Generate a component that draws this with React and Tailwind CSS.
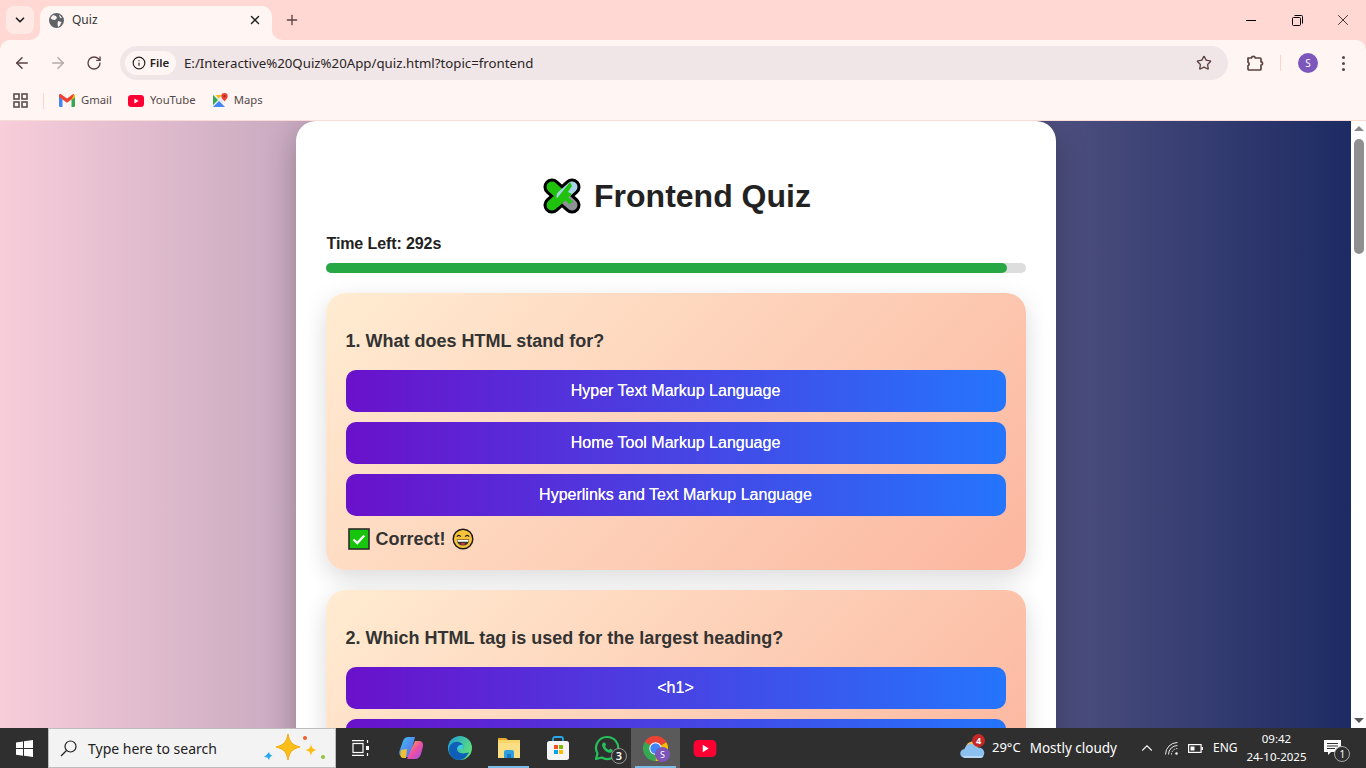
import { ArrowLeft, ArrowRight, RotateCw, Star, X, Plus, ChevronDown, ChevronUp, Info } from 'lucide-react'

const options1 = ['Hyper Text Markup Language', 'Home Tool Markup Language', 'Hyperlinks and Text Markup Language']
const options2 = ['<h1>', '']

function PuzzleEmoji() {
  return (
    <svg width="38" height="36" viewBox="0 0 38 36" className="shrink-0">
      <path d="M9 9l20 18M29 9L9 27" stroke="#000" strokeWidth="17" strokeLinecap="round" fill="none" />
      <path d="M19 18L29 27" stroke="#8d9296" strokeWidth="11" strokeLinecap="round" />
      <path d="M9 9l10 9M9 27l10-9" stroke="#1fc20c" strokeWidth="11" strokeLinecap="round" />
      <path d="M29 9L19 18" stroke="#a9d3ea" strokeWidth="11" strokeLinecap="round" />
      <path d="M27 4L11 24l4 5 14-13-4-2 4-6z" fill="#1fc20c" />
      <path d="M26 26l-7-7 3-3 8 8z" fill="#1fc20c" />
    </svg>
  )
}

function CheckEmoji() {
  return (
    <svg width="22" height="22" viewBox="0 0 22 22" className="shrink-0">
      <rect x="1" y="1" width="20" height="20" fill="#17c60c" stroke="#2b2b2b" strokeWidth="1.6" />
      <path d="M5.500 11.500l3.800 3.600 7-7.600" fill="none" stroke="#fff" strokeWidth="2.200" />
    </svg>
  )
}

function GrinEmoji() {
  return (
    <svg width="22" height="22" viewBox="0 0 22 22" className="shrink-0">
      <circle cx="11" cy="11" r="9.800" fill="#f8c23a" stroke="#1b1b1b" strokeWidth="1.400" />
      <path d="M4.800 8.600q2-2.600 4 0M13.200 8.600q2-2.600 4 0" fill="none" stroke="#1b1b1b" strokeWidth="1.200" />
      <path d="M4.800 11.500h12.400q-.4 6-6.200 6t-6.200-6z" fill="#333" />
      <path d="M5.400 12h11.200l-.4 1.800H5.800z" fill="#fff" />
      <path d="M8 16q3-2 6 0q-3 1.600-6 0z" fill="#e8403a" />
    </svg>
  )
}

function GmailIcon() {
  return (
    <svg width="16" height="13" viewBox="0 0 16 13">
      <path d="M0 2.500V12a1 1 0 0 0 1 1h2.500V5.500z" fill="#4285f4" />
      <path d="M16 2.500V12a1 1 0 0 1-1 1h-2.500V5.500z" fill="#34a853" />
      <path d="M12.500 1.200L16 .8v2.500l-3.500 2.600z" fill="#fbbc04" />
      <path d="M0 1.500C0 .2 1.400-.4 2.400.4L8 4.600 13.600.4c1-.8 1.400-.2 1.400-.2L12.500 5.500 8 8.800 3.500 5.500 0 3z" fill="#ea4335" />
    </svg>
  )
}

function YoutubeIcon({ w = 16, h = 12 }) {
  return (
    <svg width={w} height={h} viewBox="0 0 16 12">
      <rect width="16" height="12" rx="3.200" fill="#ff0033" />
      <path d="M6.400 3.400l4.200 2.600-4.200 2.600z" fill="#fff" />
    </svg>
  )
}

function MapsIcon() {
  return (
    <svg width="15" height="16" viewBox="0 0 15 16">
      <path d="M0 2h10v12H0z" fill="#e8eaed" />
      <path d="M0 2l5 5-5 5z" fill="#34a853" />
      <path d="M0 14l6-6 6 6z" fill="#4285f4" />
      <path d="M3 2h6L5.500 5.500z" fill="#fbbc04" />
      <path d="M11.500 0a3.200 3.200 0 0 1 3.200 3.200c0 2.300-3.200 5-3.200 5s-3.200-2.700-3.200-5A3.200 3.200 0 0 1 11.500 0z" fill="#ea4335" />
      <circle cx="11.500" cy="3.200" r="1.100" fill="#a52714" />
    </svg>
  )
}

function ExtensionIcon() {
  return (
    <svg width="18" height="18" viewBox="0 0 18 18" fill="none" stroke="#5b4240" strokeWidth="1.700">
      <path d="M2 4h3.400a2 2 0 0 1 3.900 0H14a1 1 0 0 1 1 1v2.800a1.600 1.600 0 0 1 0 3.200V15a1 1 0 0 1-1 1H3a1 1 0 0 1-1-1v-3.200a2 2 0 0 0 0-3.600z" strokeLinejoin="round" />
    </svg>
  )
}

function AppsIcon() {
  return (
    <svg width="15" height="15" viewBox="0 0 15 15" fill="none" stroke="#5b4f4d" strokeWidth="1.600">
      <rect x="1" y="1" width="5" height="5" />
      <rect x="9" y="1" width="5" height="5" />
      <rect x="1" y="9" width="5" height="5" />
      <rect x="9" y="9" width="5" height="5" />
    </svg>
  )
}

function GlobeIcon() {
  return (
    <svg width="15" height="15" viewBox="0 0 15 15">
      <circle cx="7.500" cy="7.500" r="7.500" fill="#5f6368" />
      <path d="M4 2l3 1 1 2-2 2-3-.5L1.500 5zM9 8l3.500 1L11 12.500 9 14l-.5-3zM10 1.500l3 3-2 .5z" fill="#fff6f4" />
    </svg>
  )
}

function WindowsLogo() {
  return (
    <svg width="17" height="17" viewBox="0 0 17 17" fill="#fff">
      <path d="M0 2.400l7-1v6.700H0zM8 1.300L17 0v8.100H8zM0 9h7v6.700l-7-1zM8 9h9v8l-9-1.300z" />
    </svg>
  )
}

function SearchGlass() {
  return (
    <svg width="17" height="17" viewBox="0 0 17 17" fill="none" stroke="#1f1f1f" strokeWidth="1.200">
      <circle cx="10.500" cy="6.500" r="5.500" />
      <path d="M6.500 10.500L1 16" />
    </svg>
  )
}

function Sparkles() {
  return (
    <svg width="66" height="36" viewBox="0 0 66 36" className="shrink-0">
      <path d="M24 4c1.500 8 4 11 12 13-8 2-10.500 5-12 13-1.500-8-4-11-12-13 8-2 10.500-5 12-13z" fill="#fbbf1c" stroke="#f6a90f" strokeWidth="1" strokeLinejoin="round" />
      <path d="M47 14c.8 4 2 5.300 6 6-4 .7-5.200 2-6 6-.8-4-2-5.300-6-6 4-.7 5.200-2 6-6z" fill="#fbbf1c" />
      <path d="M5 22c.5 2 1 3 3.500 3.500L6 27l-1 3-1.500-2.500L0 27l2.500-2z" fill="#27a8f0" />
      <circle cx="41" cy="8" r="2" fill="#f0602a" />
      <circle cx="59" cy="27" r="2" fill="#8cc63f" />
    </svg>
  )
}

function TaskView() {
  return (
    <svg width="18" height="16" viewBox="0 0 18 16" fill="none" stroke="#fff" strokeWidth="1.200">
      <path d="M0 .6h12M0 15.400h12" />
      <rect x="1" y="3.500" width="10" height="9" />
      <path d="M15.500 0v3M15.500 13v3" />
      <rect x="14" y="6" width="3" height="4" fill="#fff" stroke="none" />
    </svg>
  )
}

function CopilotIcon() {
  return (
    <svg width="24" height="22" viewBox="0 0 24 22">
      <defs>
        <linearGradient id="cp1" x1="0" y1="0" x2="1" y2="1">
          <stop offset="0" stopColor="#36c6f0" />
          <stop offset="1" stopColor="#6a5cf0" />
        </linearGradient>
        <linearGradient id="cp2" x1="0" y1="0" x2="1" y2="1">
          <stop offset="0" stopColor="#f0d030" />
          <stop offset="0.5" stopColor="#f04fa0" />
          <stop offset="1" stopColor="#9a4ff0" />
        </linearGradient>
      </defs>
      <path d="M9 0h7l-5 20H5c-4 0-5.500-3-4.500-6L4 4c1-3 3-4 5-4z" fill="url(#cp1)" />
      <path d="M8 22h8c3 0 5-2 6-5l2-8c.5-3-1-5-4-5h-4z" fill="url(#cp2)" />
      <path d="M2 13l6-1-1 9H4c-3 0-3-4-2-8z" fill="#f0c030" />
    </svg>
  )
}

function EdgeIcon() {
  return (
    <svg width="24" height="24" viewBox="0 0 24 24">
      <defs>
        <linearGradient id="ed1" x1="0" y1="0" x2="1" y2="0.6">
          <stop offset="0" stopColor="#1f9ed8" />
          <stop offset="1" stopColor="#5ee07a" />
        </linearGradient>
      </defs>
      <circle cx="12" cy="12" r="12" fill="url(#ed1)" />
      <path d="M1 14C1 7 8 4 13 7c3 2 3 5 2 6h-6c0 4 6 6 12 3-2 5-6 8-10 8-5 0-10-4-10-10z" fill="#0f5fb8" />
      <path d="M9 13c0-3 3-5 6-4 1 1 1 3 0 4z" fill="#3ccbd8" />
    </svg>
  )
}

function ExplorerIcon() {
  return (
    <svg width="24" height="20" viewBox="0 0 24 20">
      <path d="M1 0h8l2 2h-10z" fill="#e2a92c" />
      <rect x="1" y="2" width="22" height="18" fill="#f8d568" />
      <rect x="1" y="5" width="22" height="15" fill="#fbdf85" />
      <path d="M7 20v-6a2 2 0 0 1 2-2h6a2 2 0 0 1 2 2v6h-3v-4h-4v4z" fill="#2f9fe0" />
      <rect x="10" y="16" width="4" height="4" fill="#1c78c0" />
    </svg>
  )
}

function StoreIcon() {
  return (
    <svg width="24" height="24" viewBox="0 0 24 24">
      <path d="M7 6V3a2 2 0 0 1 2-2h6a2 2 0 0 1 2 2v3" fill="none" stroke="#29a8e8" strokeWidth="1.800" />
      <rect x="1" y="5" width="22" height="19" rx="2.500" fill="#f5f5f5" />
      <rect x="8" y="9" width="4" height="4" fill="#f25022" />
      <rect x="13" y="9" width="4" height="4" fill="#7fba00" />
      <rect x="8" y="14" width="4" height="4" fill="#00a4ef" />
      <rect x="13" y="14" width="4" height="4" fill="#ffb900" />
    </svg>
  )
}

function WhatsappIcon() {
  return (
    <svg width="26" height="26" viewBox="0 0 26 26">
      <path d="M13 2a11 11 0 0 0-9.500 16.500L2 24l5.700-1.500A11 11 0 1 0 13 2z" fill="none" stroke="#25c05a" strokeWidth="2.200" strokeLinejoin="round" />
      <path d="M9.500 7.500c-1 .5-1.800 2-1.200 3.800 1 3 3.500 5.400 6.400 6.400 1.800.5 3.300-.2 3.800-1.200l.3-1.500-2.700-1.400-1.100 1.300c-1.800-.6-3.300-2.100-4-3.900l1.200-1.100L11 7.700z" fill="#25c05a" />
    </svg>
  )
}

function ChromeIcon() {
  return (
    <svg width="25" height="25" viewBox="0 0 24 24">
      <g fill="none" strokeWidth="6.200">
        <circle cx="12" cy="12" r="9" stroke="#ea4335" strokeDasharray="18.850 37.700" transform="rotate(-150 12 12)" />
        <circle cx="12" cy="12" r="9" stroke="#fbbc04" strokeDasharray="18.850 37.700" transform="rotate(-30 12 12)" />
        <circle cx="12" cy="12" r="9" stroke="#34a853" strokeDasharray="18.850 37.700" transform="rotate(90 12 12)" />
      </g>
      <circle cx="12" cy="12" r="6" fill="#fff" />
      <circle cx="12" cy="12" r="5" fill="#4285f4" />
    </svg>
  )
}

function CloudIcon() {
  return (
    <svg width="26" height="22" viewBox="0 0 26 22">
      <path d="M6 10a7 7 0 0 1 13-2l-3 6z" fill="#f0c060" />
      <path d="M5 21a4.500 4.500 0 0 1-.5-9 6.500 6.500 0 0 1 12.300-1 5 5 0 0 1 4.200 10z" fill="#8cc0ee" />
      <path d="M5 21a4.500 4.500 0 0 1-2.500-2h21q-1 2-3 2z" fill="#b6d8f6" />
    </svg>
  )
}

function WifiIcon() {
  return (
    <svg width="14" height="13" viewBox="0 0 14 13" fill="none" stroke="#e8e8e8" strokeWidth="1">
      <path d="M.5 12.500A12 12 0 0 1 12.500 .5" />
      <path d="M3.500 12.500a9 9 0 0 1 9-9" />
      <path d="M6.500 12.500a6 6 0 0 1 6-6" strokeDasharray="1.500 1" />
      <circle cx="11.500" cy="11.500" r="1.200" fill="#fff" stroke="none" />
    </svg>
  )
}

function BatteryIcon() {
  return (
    <svg width="15" height="9" viewBox="0 0 15 9">
      <rect x=".6" y=".6" width="12.500" height="7.800" fill="none" stroke="#fff" strokeWidth="1.200" />
      <rect x="2.500" y="2.500" width="4" height="4" fill="#fff" />
      <rect x="13.500" y="3" width="1.500" height="3" fill="#fff" />
    </svg>
  )
}

function NotificationIcon() {
  return (
    <svg width="17" height="16" viewBox="0 0 17 16">
      <path d="M0 0h17v12H7l-3 3v-3H0z" fill="#fff" />
      <path d="M3 3.500h11M3 6h11M3 8.500h8" stroke="#333" strokeWidth="1" />
    </svg>
  )
}

function Bookmark({ icon, label }) {
  return (
    <div className="flex items-center gap-[6px] text-[11.3px] text-[#55494a]">
      {icon}
      <span>{label}</span>
    </div>
  )
}

function TaskIcon({ children, active, running, wide }) {
  return (
    <div className={`relative flex h-full items-center justify-center ${wide ? 'w-[50px]' : 'w-[49px]'} ${active ? 'bg-[#5a5a5a]' : ''}`}>
      {children}
      {running && <span className="absolute bottom-0 left-[4px] right-[4px] h-[2px] bg-[#7cbbe8]" />}
    </div>
  )
}

function Question({ number, text, options, feedback }) {
  return (
    <section className="mt-5 rounded-[20px] bg-[linear-gradient(135deg,#ffecd2,#fcb69f)] p-5 pt-[36px] shadow-[0_8px_25px_rgba(0,0,0,0.15)]">
      <h3 className="text-[18px] leading-[24px] font-bold text-[#333]">
        {number}. {text}
      </h3>
      <div className="mt-[17px] flex flex-col gap-[10px]">
        {options.map((option, i) => (
          <button key={i} className="h-[42px] w-full rounded-[10px] bg-[linear-gradient(90deg,#6a11cb,#2575fc)] text-[16px] font-medium text-white [text-shadow:0_0_0.6px_#fff]">
            {option}
          </button>
        ))}
      </div>
      {feedback && (
        <div className="mt-[12px] flex h-[22px] items-center gap-[6px] pl-[2px] text-[18px] font-bold text-[#333]">
          <CheckEmoji />
          <span>Correct!</span>
          <GrinEmoji />
        </div>
      )}
    </section>
  )
}

export default function App() {
  return (
    <div className="flex h-[768px] w-[1366px] flex-col overflow-hidden bg-[#ffd8d3] font-['Noto_Sans',sans-serif]">
      {/* tab strip */}
      <div className="flex h-[40px] shrink-0 items-end">
        <div className="mb-[6px] ml-[6px] flex h-[28px] w-[28px] items-center justify-center rounded-[8px] bg-[#ffe9e5]">
          <ChevronDown size={14} strokeWidth={3} color="#222" />
        </div>
        <div className="relative ml-[6px] flex h-[34px] w-[232px] items-center rounded-t-[10px] bg-[#fff6f4] pb-[6px] pl-[9px] pr-[10px]">
          <GlobeIcon />
          <span className="ml-[8px] text-[12px] text-[#333]">Quiz</span>
          <X size={14} strokeWidth={2.5} color="#222" className="ml-auto" />
          <svg width="10" height="10" viewBox="0 0 10 10" className="absolute -left-[10px] bottom-0">
            <path d="M10 0v10H0a10 10 0 0 0 10-10z" fill="#fff6f4" />
          </svg>
          <svg width="10" height="10" viewBox="0 0 10 10" className="absolute -right-[10px] bottom-0">
            <path d="M0 0v10h10A10 10 0 0 1 0 0z" fill="#fff6f4" />
          </svg>
        </div>
        <div className="mb-[12px] ml-[12px] flex h-[16px] w-[16px] items-center justify-center">
          <Plus size={16} strokeWidth={2} color="#5b4240" />
        </div>
        <div className="ml-auto flex h-full items-center self-start">
          <div className="flex h-[40px] w-[46px] items-center justify-center">
            <span className="h-[1px] w-[10px] bg-black" />
          </div>
          <div className="flex h-[40px] w-[46px] items-center justify-center">
            <svg width="11" height="11" viewBox="0 0 11 11" fill="none" stroke="#000" strokeWidth="1">
              <rect x=".5" y="2.500" width="8" height="8" rx="1" />
              <path d="M2.500 .5h7a1 1 0 0 1 1 1v7" />
            </svg>
          </div>
          <div className="flex h-[40px] w-[46px] items-center justify-center">
            <X size={18} strokeWidth={1} color="#000" />
          </div>
        </div>
      </div>

      {/* toolbar */}
      <div className="flex h-[46px] shrink-0 items-center rounded-t-[10px] bg-[#fff6f4] pl-[13px] pr-[14px]">
        <ArrowLeft size={18} color="#5b4240" strokeWidth={2} />
        <ArrowRight size={18} color="#b8aaa8" strokeWidth={2} className="ml-[18px]" />
        <RotateCw size={16} color="#5b4240" strokeWidth={2} className="ml-[19px]" />
        <div className="ml-[18px] flex h-[34px] w-[1108px] items-center rounded-full bg-[#f1e6e7] pl-[5px] pr-[16px]">
          <div className="flex h-[24px] w-[51px] items-center justify-center gap-[4px] rounded-full bg-[#fff6f4] text-[11.5px] font-semibold text-[#222]">
            <Info size={14} color="#222" strokeWidth={2} />
            File
          </div>
          <span className="ml-[8px] pt-[1px] text-[13.25px] text-[#2a2424]">E:/Interactive%20Quiz%20App/quiz.html?topic=frontend</span>
          <Star size={16} strokeWidth={2} color="#5b4240" className="ml-auto" />
        </div>
        <div className="ml-[18px]">
          <ExtensionIcon />
        </div>
        <span className="ml-[16px] h-[16px] w-[1px] bg-[#ffd2cc]" />
        <div className="ml-[17px] flex h-[20px] w-[20px] items-center justify-center rounded-full bg-[#7c56bb] text-[10px] text-white">S</div>
        <div className="ml-[24px] flex flex-col gap-[3px]">
          <span className="h-[3px] w-[3px] rounded-full bg-[#5b4240]" />
          <span className="h-[3px] w-[3px] rounded-full bg-[#5b4240]" />
          <span className="h-[3px] w-[3px] rounded-full bg-[#5b4240]" />
        </div>
      </div>

      {/* bookmarks bar */}
      <div className="flex h-[35px] shrink-0 items-center border-b border-[#f7dcd7] bg-[#fff6f4] pb-[5px] pl-[13px]">
        <AppsIcon />
        <span className="ml-[15px] mr-[15px] h-[16px] w-[1px] bg-[#ffd2cc]" />
        <Bookmark icon={<GmailIcon />} label="Gmail" />
        <div className="ml-[16px]">
          <Bookmark icon={<YoutubeIcon />} label="YouTube" />
        </div>
        <div className="ml-[17px]">
          <Bookmark icon={<MapsIcon />} label="Maps" />
        </div>
      </div>

      {/* page */}
      <div className="flex min-h-0 flex-1">
        <main className="min-h-0 flex-1 overflow-hidden bg-[linear-gradient(to_right,#f8cdda,#1d2b64)] font-['Liberation_Sans',sans-serif]">
          <div className="mx-auto w-[760px] rounded-[20px] bg-white px-[30px] pt-[56px] shadow-[0_10px_30px_rgba(0,0,0,0.25)]">
            <h1 className="flex h-[38px] items-center justify-center gap-[13px] pl-[3px] text-[32px] font-bold text-[#222]">
              <PuzzleEmoji />
              Frontend Quiz
            </h1>
            <div className="mt-[19px] pl-[1px] text-[16px] leading-[20px] font-bold tracking-[-0.1px] text-[#222]">Time Left: 292s</div>
            <div className="mt-[9px] h-[10px] w-full rounded-full bg-[#ddd]">
              <div className="h-full w-[97.3%] rounded-full bg-[#28a745]" />
            </div>
            <Question number={1} text="What does HTML stand for?" options={options1} feedback />
            <Question number={2} text="Which HTML tag is used for the largest heading?" options={options2} />
          </div>
        </main>
        {/* scrollbar */}
        <div className="relative w-[15px] shrink-0 bg-white">
          <div className="mx-auto mt-[5px] h-0 w-0 border-x-[5px] border-b-[5px] border-x-transparent border-b-[#8a8a8a]" />
          <div className="mx-auto mt-[8px] h-[115px] w-[10px] rounded-full bg-[#8f8f8f]" />
          <div className="absolute bottom-[5px] left-[2.5px] h-0 w-0 border-x-[5px] border-t-[5px] border-x-transparent border-t-[#555]" />
        </div>
      </div>

      {/* taskbar */}
      <div className="flex h-[40px] shrink-0 items-center bg-[#2f2f2f] text-white">
        <div className="flex h-full w-[48px] items-center justify-center">
          <WindowsLogo />
        </div>
        <div className="flex h-full w-[288px] items-center border border-[#bdbdbd] bg-[#f3f3f3] pl-[11px] text-[14px] text-[#222]">
          <SearchGlass />
          <span className="ml-[11px]">Type here to search</span>
          <div className="ml-auto mr-[5px] flex">
            <Sparkles />
          </div>
        </div>
        <TaskIcon wide>
          <TaskView />
        </TaskIcon>
        <TaskIcon>
          <CopilotIcon />
        </TaskIcon>
        <TaskIcon>
          <EdgeIcon />
        </TaskIcon>
        <TaskIcon running>
          <ExplorerIcon />
        </TaskIcon>
        <TaskIcon>
          <StoreIcon />
        </TaskIcon>
        <TaskIcon>
          <WhatsappIcon />
          <span className="absolute bottom-[4px] right-[4px] flex h-[16px] w-[16px] items-center justify-center rounded-full border border-[#999] bg-[#2f2f2f] text-[11px] font-semibold">3</span>
        </TaskIcon>
        <TaskIcon active running>
          <ChromeIcon />
          <span className="absolute bottom-[6px] right-[10px] flex h-[15px] w-[15px] items-center justify-center rounded-full bg-[#7c56bb] text-[9px]">S</span>
        </TaskIcon>
        <TaskIcon>
          <YoutubeIcon w={24} h={17} />
        </TaskIcon>

        <div className="relative ml-[231px] flex items-center">
          <CloudIcon />
          <span className="absolute -top-[3px] left-[12px] flex h-[13px] w-[13px] items-center justify-center rounded-full bg-[#c62828] text-[9px] font-bold">4</span>
          <span className="ml-[6px] text-[13px]">29°C</span>
          <span className="ml-[9px] text-[13.5px]">Mostly cloudy</span>
        </div>
        <ChevronUp size={18} strokeWidth={1.5} color="#eee" className="ml-[21px]" />
        <div className="ml-[9px]">
          <WifiIcon />
        </div>
        <div className="ml-[9px] flex">
          <BatteryIcon />
        </div>
        <span className="ml-[10px] text-[12px]">ENG</span>
        <div className="ml-[10px] flex w-[58px] flex-col items-center text-[11.5px] leading-[18px]">
          <span>09:42</span>
          <span className="whitespace-nowrap">24-10-2025</span>
        </div>
        <div className="relative ml-[19px]">
          <NotificationIcon />
          <span className="absolute -bottom-[6px] -right-[9px] flex h-[16px] w-[16px] items-center justify-center rounded-full border border-[#aaa] bg-[#2f2f2f] text-[10px]">1</span>
        </div>
      </div>
    </div>
  )
}
